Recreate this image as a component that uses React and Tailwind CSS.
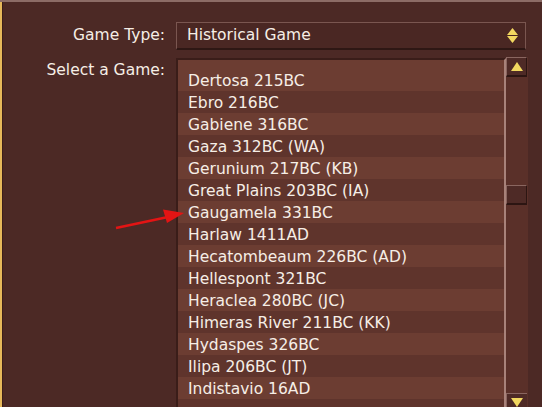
import React from 'react';

const games = [
  'Dertosa 215BC',
  'Ebro 216BC',
  'Gabiene 316BC',
  'Gaza 312BC (WA)',
  'Gerunium 217BC (KB)',
  'Great Plains 203BC (IA)',
  'Gaugamela 331BC',
  'Harlaw 1411AD',
  'Hecatombeaum 226BC (AD)',
  'Hellespont 321BC',
  'Heraclea 280BC (JC)',
  'Himeras River 211BC (KK)',
  'Hydaspes 326BC',
  'Ilipa 206BC (JT)',
  'Indistavio 16AD',
  '',
];

function Tri({ down }) {
  return (
    <svg width="12" height="9" viewBox="0 0 12 9">
      <path d={down ? 'M0 0 H12 L6 9 Z' : 'M6 0 L12 9 H0 Z'} fill="#f2d860" />
    </svg>
  );
}

export default function App() {
  return (
    <div
      className="w-[542px] h-[407px] overflow-hidden relative bg-[#4c2925] border-t-2 border-[#8c6c66] flex text-[#f6eee6]"
      style={{ fontFamily: '"DejaVu Sans", sans-serif' }}
    >
      <div className="w-[2px] bg-[#e6b85a]" />
      <div className="w-[1px] bg-[#3a1d1a]" />

      <div className="flex-1 pt-[20px]">
        {/* Game Type row */}
        <div className="flex items-center h-[28px]">
          <div className="w-[173px] text-right text-[15.5px] pr-[11px]">Game Type:</div>
          <div className="w-[350px] h-[28px] flex items-center justify-between bg-[#4a2723] border-t border-l border-r border-[#7a5650] border-b-2 border-b-[#2e1714] pl-[10px] pr-[7px]">
            <span className="text-[15.5px] pt-[1px]">Historical Game</span>
            <div className="flex flex-col gap-[1px]">
              <svg width="11" height="7" viewBox="0 0 11 7"><path d="M5.5 0 L11 7 H0 Z" fill="#f2d860" /></svg>
              <svg width="11" height="7" viewBox="0 0 11 7"><path d="M0 0 H11 L5.5 7 Z" fill="#f2d860" /></svg>
            </div>
          </div>
        </div>

        {/* Select a Game row */}
        <div className="flex mt-[8px]">
          <div className="w-[173px] text-right text-[15.5px] pr-[11px] mt-[1px]">Select a Game:</div>
          <div className="flex">
            <div className="w-[330px] h-[356px] overflow-hidden bg-[#6c3d32] border-t-2 border-l-2 border-[#3a1d19] border-r-2 border-r-[#a8827a] pt-[9px]">
              {games.map((g, i) => (
                <div
                  key={i}
                  className={`h-[22px] flex items-center pt-[4px] pl-[10px] text-[15.5px] ${i % 2 ? 'bg-[#5f342c]' : 'bg-[#6c3d32]'}`}
                >
                  {g}
                </div>
              ))}
            </div>
            <div className="w-[22px] h-[356px] -mt-[1px] bg-[#5a3029] flex flex-col">
              <div className="h-[20px] w-[21px] flex items-center justify-center bg-[#4e2a26] border-t border-l border-[#8a6660] border-b-2 border-r border-b-[#2c1512] border-r-[#2c1512]">
                <Tri />
              </div>
              <div className="flex-1 relative">
                <div className="absolute left-0 top-[108px] w-[21px] h-[20px] bg-[#4e2a26] border-t border-l border-[#8a6660] border-b-2 border-r border-b-[#2c1512] border-r-[#2c1512]" />
              </div>
              <div className="h-[20px] w-[21px] flex items-start pt-[4px] justify-center bg-[#4e2a26] border-t border-l border-[#8a6660]">
                <Tri down />
              </div>
            </div>
          </div>
        </div>
      </div>

      {/* red arrow annotation */}
      <svg className="absolute left-0 top-0" width="542" height="407" viewBox="0 0 542 407">
        <line x1="116" y1="226" x2="168" y2="215" stroke="#e31414" strokeWidth="2.5" />
        <path d="M184 211 L163 207.5 L167 221 Z" fill="#e31414" />
      </svg>
    </div>
  );
}
